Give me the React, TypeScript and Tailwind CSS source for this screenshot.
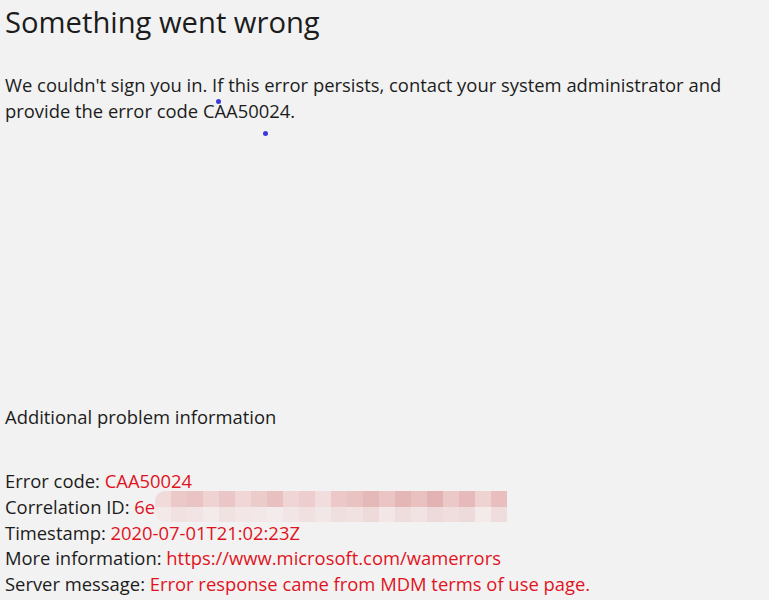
const blocks = [
  "#f0dada", "#ecc9c9", "#eac4c4", "#efd3d3", "#ebc6c6", "#f0d6d6", "#eccbcb", "#e8c0c0", "#efd5d5",
  "#edcdcd", "#f1dddd", "#ecc8c8", "#e9c2c2", "#e6b9b9", "#ebc5c5", "#e5b6b6", "#e9c1c1", "#e3b2b2",
  "#ecc9c9", "#e6baba", "#efd2d2", "#e8bebe",
];
const blocks2 = [
  "#f3e9e9", "#f1e1e1", "#f2e4e4", "#f3eaea", "#f1e2e2", "#f2e6e6", "#f3e8e8", "#f4ecec", "#f2e5e5",
  "#f1e0e0", "#f2e7e7", "#f0dfdf", "#f1e2e2", "#efdada", "#f2e6e6", "#efdcdc", "#f1e3e3", "#eedada",
  "#f0dede", "#eddada", "#f3eaea", "#efdddd",
];

function Row({ label, value, children }: { label: string; value: string; children?: React.ReactNode }) {
  return (
    <div className="relative flex items-center whitespace-nowrap">
      <span className="text-[#1c1c1c]">{label}&nbsp;</span>
      <span className="text-[#e0141e]">{value}</span>
      {children}
    </div>
  );
}

export default function App() {
  return (
    <div className="relative w-full h-[600px] overflow-hidden bg-[#f2f2f2] px-[5px] font-['Open_Sans',sans-serif] text-[#1c1c1c]">
      <h1 className="text-[29.2px] leading-[44px] font-normal">Something went wrong</h1>
      <p className="mt-[28px] text-[18.4px] leading-[26px] w-[740px]">
        We couldn't sign you in. If this error persists, contact your system administrator and provide the error code CAA50024.
      </p>
      <div className="mt-[280px] text-[18.4px] leading-[26px]">Additional problem information</div>
      <div className="mt-[38px] text-[18.4px] leading-[25.75px]">
        <Row label="Error code:" value="CAA50024" />
        <Row label="Correlation ID:" value="6e">
          <div className="absolute left-[150px] top-[-3px] flex flex-col overflow-hidden rounded-l-[10px]">
            <div className="flex">
              {blocks.map((c, i) => (
                <div key={i} className="w-[16px] h-[16px]" style={{ background: c }} />
              ))}
            </div>
            <div className="flex">
              {blocks2.map((c, i) => (
                <div key={i} className="w-[16px] h-[15px]" style={{ background: c }} />
              ))}
            </div>
          </div>
        </Row>
        <Row label="Timestamp:" value="2020-07-01T21:02:23Z" />
        <Row label="More information:" value="https://www.microsoft.com/wamerrors" />
        <Row label="Server message:" value="Error response came from MDM terms of use page." />
      </div>
      <div className="absolute left-[216px] top-[99px] w-[5px] h-[5px] rounded-full bg-[#3b3bdb]" />
      <div className="absolute left-[263px] top-[131px] w-[5px] h-[5px] rounded-full bg-[#3b3bdb]" />
    </div>
  );
}
